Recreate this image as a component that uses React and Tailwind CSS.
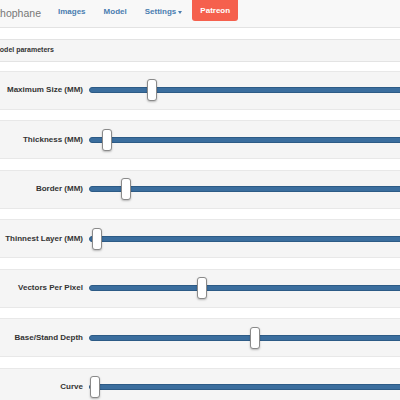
import React from "react";

const rows = [
  { label: "Maximum Size (MM)", pos: 152 },
  { label: "Thickness (MM)", pos: 107 },
  { label: "Border (MM)", pos: 126 },
  { label: "Thinnest Layer (MM)", pos: 97 },
  { label: "Vectors Per Pixel", pos: 202 },
  { label: "Base/Stand Depth", pos: 255 },
  { label: "Curve", pos: 95 },
];

function Row({ label, pos }) {
  return (
    <div className="h-[39px] mb-[10.5px] bg-[#f5f5f5] border-y border-[#e8e8e8] flex items-center">
      <div className="w-[89px] shrink-0 pr-[6px] text-right text-[8px] font-bold text-[#333]">
        {label}
      </div>
      <div className="relative flex-1 h-[22px]">
        <div className="absolute left-0 right-[-20px] top-[8px] h-[6px] rounded-l-[3px] bg-[#3b6e9e] border border-[#2d5b86]" />
        <div
          className="absolute top-0 w-[10px] h-[22px] rounded-[3px] bg-white border border-[#8a8a8a] shadow-[0_1px_2px_rgba(0,0,0,0.25)]"
          style={{ left: pos - 89 - 5 }}
        />
      </div>
    </div>
  );
}

export default function App() {
  return (
    <div
      className="w-[400px] h-[400px] overflow-hidden bg-white"
      style={{ fontFamily: '"Liberation Sans", Arial, sans-serif' }}
    >
      <div className="h-[28px] bg-[#f8f8f8] border-b border-[#e3e3e3] flex items-start">
        <div className="ml-[-11px] mt-[6px] text-[10.5px] text-[#777] w-[62px] whitespace-nowrap">Lithophane</div>
        <div className="mt-[6px] flex items-center text-[8px] font-bold text-[#4a7db0]">
          <span className="ml-[7px]">Images</span>
          <span className="ml-[18px]">Model</span>
          <span className="ml-[18px] flex items-center">
            Settings
            <span className="ml-[2px] inline-block w-0 h-0 border-l-[2.5px] border-r-[2.5px] border-t-[3px] border-l-transparent border-r-transparent border-t-[#4a7db0]" />
          </span>
        </div>
        <div className="ml-[10px] w-[46px] h-[21px] bg-[#f5604d] rounded-b-[3px] flex items-center justify-center text-[8px] font-bold text-white">
          Patreon
        </div>
      </div>
      <div className="mt-[11px] h-[23px] bg-[#f5f5f5] border-y border-[#e3e3e3] flex items-center">
        <span className="ml-[-6px] text-[7px] font-bold text-[#333] whitespace-nowrap">Model parameters</span>
      </div>
      <div className="mt-[8.5px]">
        {rows.map((r) => (
          <Row key={r.label} {...r} />
        ))}
      </div>
    </div>
  );
}
